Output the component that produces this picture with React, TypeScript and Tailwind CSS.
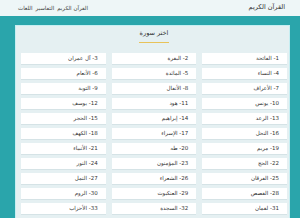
import React from "react";

const suras = [
  "الفاتحة", "البقرة", "آل عمران", "النساء", "المائدة", "الأنعام",
  "الأعراف", "الأنفال", "التوبة", "يونس", "هود", "يوسف",
  "الرعد", "إبراهيم", "الحجر", "النحل", "الإسراء", "الكهف",
  "مريم", "طه", "الأنبياء", "الحج", "المؤمنون", "النور",
  "الفرقان", "الشعراء", "النمل", "القصص", "العنكبوت", "الروم",
  "لقمان", "السجدة", "الأحزاب",
];

export default function App() {
  return (
    <div
      dir="rtl"
      className="w-[300px] h-[218px] overflow-hidden bg-[#2aa5ab] text-[#333]"
      style={{ fontFamily: "'DejaVu Sans', 'Noto Sans', sans-serif" }}
    >
      <header className="h-[16px] bg-[#eef6f7] flex items-center justify-between pr-[15px] pl-[18px]">
        <span className="text-[6.5px] text-[#333]">القرآن الكريم</span>
        <nav className="flex gap-[3px] text-[5.5px] text-[#444]">
          <span>القرآن الكريم</span>
          <span>التفاسير</span>
          <span>اللغات</span>
        </nav>
      </header>

      <div className="pt-[9px] pr-[10px] pl-[15px]">
        <div className="bg-[#e5f0f2] border border-[#c6eef2] h-[200px] pr-[2px] pl-[5px]">
          <div className="flex justify-center pt-[2px]">
            <div className="flex flex-col items-center">
              <span className="text-[6.5px] leading-[10px]">اختر سورة</span>
              <span className="mt-[4px] h-[1px] w-[30px] bg-[#e8c35a]" />
            </div>
          </div>
          <div className="grid grid-cols-3 gap-x-[6px] gap-y-[4px] mt-[10px]">
            {suras.map((s, i) => (
              <div
                key={s}
                className="h-[11px] bg-white shadow-[0_1px_0_#d5e3e6] flex items-center pr-[8px] text-[5.5px]"
              >
                {i + 1}- {s}
              </div>
            ))}
          </div>
        </div>
      </div>
    </div>
  );
}
